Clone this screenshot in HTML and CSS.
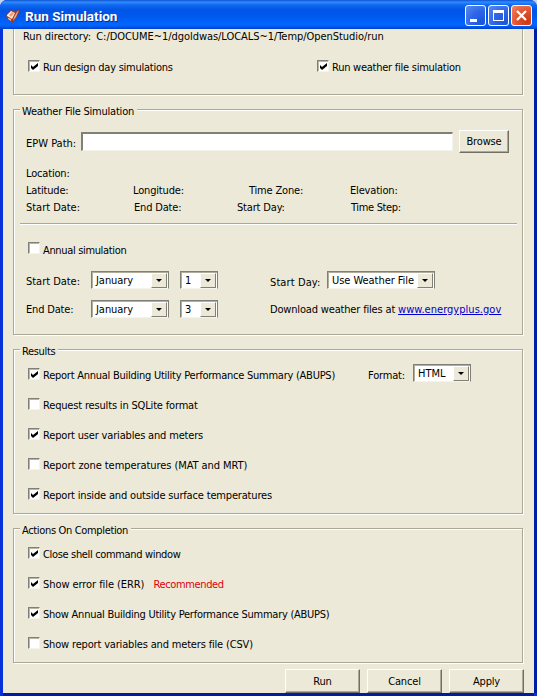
FILE: index.html
```html
<!DOCTYPE html>
<html lang="en">
<head>
<meta charset="utf-8">
<title>Run Simulation</title>
<link rel="stylesheet" href="styles.css">
</head>
<body>
<svg class="defs" width="0" height="0">
  <symbol id="check" viewBox="0 0 7 7"><path d="M0 2v3l2 2 5-4V0L2 4z" fill="#000"/></symbol>
</svg>
<div class="window">
  <header class="titlebar">
    <svg class="app-icon" width="14" height="14" viewBox="0 0 14 14">
      <path d="M0 6L5 1l4 1 4-1v3L7 14l-3-2-3-2z" fill="#9c3a26"/>
      <path d="M1 6l4-4 4 2-3 6-5-3z" fill="#ffe9da"/>
      <path d="M3 6l3-3 2 1-3 4z" fill="#f59a70"/>
      <path d="M13 1l-3 7-3 4 1-4 3-5z" fill="#e8a888"/>
      <path d="M2 9l3 1v2l-3-2z" fill="#f0c0b0"/>
    </svg>
    <h1>Run Simulation</h1>
    <div class="controls">
      <span class="ctl"><svg width="19" height="19"><path d="M4 13h7v3H4z" fill="#fff"/></svg></span>
      <span class="ctl"><svg width="19" height="19"><path d="M4 4h11v11H4zM5 7v7h9V7z" fill="#fff" fill-rule="evenodd"/></svg></span>
      <span class="ctl close"><svg width="19" height="19"><path d="M5 5l9 9M14 5l-9 9" stroke="#fff" stroke-width="2.300"/></svg></span>
    </div>
  </header>
  <main class="client">
    <section class="group g-run">
      <p class="rundir"><span class="w-rd">Run directory:</span> <span class="w-path">C:/DOCUME~1/dgoldwas/LOCALS~1/Temp/OpenStudio/run</span></p>
      <div class="runs">
        <label class="opt t2"><i class="box"><svg width="7" height="7"><use href="#check"/></svg></i><span>Run design day simulations</span></label>
        <label class="opt t2"><i class="box"><svg width="7" height="7"><use href="#check"/></svg></i><span>Run weather file simulation</span></label>
      </div>
    </section>
    <section class="group g-weather">
      <h2>Weather File Simulation</h2>
      <div class="epw"><span class="lbl">EPW Path:</span><span class="field"></span><button>Browse</button></div>
      <div class="info">
        <span>Location:</span>
        <span class="r2">Latitude:</span><span>Longitude:</span><span>Time Zone:</span><span>Elevation:</span>
        <span class="t0">Start Date:</span><span class="n1">End Date:</span><span class="n2">Start Day:</span><span class="n1 t3">Time Step:</span>
      </div>
      <hr>
      <label class="opt annual t3"><i class="box"></i><span>Annual simulation</span></label>
      <div class="dates">
        <span class="t0">Start Date:</span>
        <div class="select"><span>January</span><b></b></div>
        <div class="select"><span>1</span><b></b></div>
        <div class="right"><span class="sd">Start Day:</span><div class="select day"><span>Use Weather File</span><b></b></div></div>
        <span class="low">End Date:</span>
        <div class="select"><span>January</span><b></b></div>
        <div class="select"><span>3</span><b></b></div>
        <div class="right"><span class="low">Download weather files at <a>www.energyplus.gov</a></span></div>
      </div>
    </section>
    <section class="group g-results">
      <h2 class="t3">Results</h2>
      <div class="opts">
        <div class="line"><label class="opt t2"><i class="box"><svg width="7" height="7"><use href="#check"/></svg></i><span>Report Annual Building Utility Performance Summary (ABUPS)</span></label>
          <div class="format"><span>Format:</span><div class="select"><span>HTML</span><b></b></div></div></div>
        <label class="opt"><i class="box"></i><span>Request results in SQLite format</span></label>
        <label class="opt"><i class="box"><svg width="7" height="7"><use href="#check"/></svg></i><span>Report user variables and meters</span></label>
        <label class="opt t1"><i class="box"></i><span>Report zone temperatures (MAT and MRT)</span></label>
        <label class="opt"><i class="box"><svg width="7" height="7"><use href="#check"/></svg></i><span>Report inside and outside surface temperatures</span></label>
      </div>
    </section>
    <section class="group g-actions">
      <h2 class="t3">Actions On Completion</h2>
      <div class="opts">
        <label class="opt t3"><i class="box"><svg width="7" height="7"><use href="#check"/></svg></i><span>Close shell command window</span></label>
        <label class="opt t1"><i class="box"><svg width="7" height="7"><use href="#check"/></svg></i><span>Show error file (ERR)</span><em>Recommended</em></label>
        <label class="opt t2"><i class="box"><svg width="7" height="7"><use href="#check"/></svg></i><span>Show Annual Building Utility Performance Summary (ABUPS)</span></label>
        <label class="opt"><i class="box"></i><span>Show report variables and meters file (CSV)</span></label>
      </div>
    </section>
    <footer><button>Run</button><button>Cancel</button><button>Apply</button></footer>
  </main>
</div>
</body>
</html>
```
FILE: styles.css
```css
* { box-sizing: border-box; margin: 0; padding: 0; }
body {
  width: 537px; height: 696px; overflow: hidden; background: #c8d4ec;
  font: 11px/16px "DejaVu Sans Condensed", "DejaVu Sans", sans-serif;
  font-stretch: condensed; letter-spacing: -0.17px; color: #000; white-space: nowrap;
}
.t0 { letter-spacing: -0.03px; }
.t1 { letter-spacing: -0.07px; }
.t2 { letter-spacing: -0.25px; }
.t3, h2.t3 { letter-spacing: -0.34px; }
.defs { position: absolute; }
.window {
  height: 696px; border-radius: 7px 7px 0 0; overflow: hidden;
  display: flex; flex-direction: column; background: #0831d9;
}
.titlebar {
  height: 29px; flex: none; display: flex; align-items: center; padding: 2px 5px 0 6px;
  background: linear-gradient(#0f50d0 0, #2f8cff 2px, #1068f0 5px, #0055e5 10px, #0058ee 16px, #0066ff 24px, #0060f8 26px, #0040c8 29px);
}
.app-icon { margin-right: 5px; }
h1 { flex: 1; font: bold 13.5px/16px Roboto, sans-serif; letter-spacing: 0; color: #fff; text-shadow: 1px 1px #0a2a8c; }
.controls { display: flex; gap: 2px; }
.ctl {
  width: 21px; height: 21px; border: 1px solid #fff; border-radius: 3px; display: block;
  background: radial-gradient(circle at 85% 85%, #1c56d8, #2e66e8 50%, #5c8cf0);
}
.ctl svg { display: block; }
.close { background: radial-gradient(circle at 80% 80%, #c83a10, #e2532f 50%, #ee8a6c); }
.client {
  flex: 1; margin: 0 3px 3px; background: #ece9d8; padding: 0 10px;
  display: flex; flex-direction: column; box-shadow: 0 3px 0 #001ca0, 3px 0 0 #001ca0;
}
.group { width: 510px; border: 1px solid #aca899; box-shadow: 1px 1px #fff, inset 1px 1px #fff; flex: none; }
.g-run { height: 66px; border-top: 0; box-shadow: 1px 1px #fff, inset 1px 0 #fff; }
.g-weather { height: 226px; margin-top: 14px; }
.g-results { height: 165px; margin-top: 14px; }
.g-actions { height: 135px; margin-top: 14px; }
h2 { font: inherit; letter-spacing: -0.22px; width: fit-content; height: 14px; margin: -6px 0 0 6px; padding: 0 3px 0 2px; background: #ece9d8; }
.rundir { padding-left: 9px; letter-spacing: -0.05px; }
.w-rd { margin-right: 2px; }
.runs { display: flex; margin-top: 15px; }
.runs .opt { width: 289px; flex: none; }
.runs .opt + .opt { width: auto; }
.opt { display: flex; gap: 3px; padding-left: 14px; height: 30px; }
.box {
  width: 12px; height: 12px; background: #fff; border: 1px solid; flex: none;
  border-color: #808076 #f6f4ea #f6f4ea #808076; box-shadow: inset 1px 1px #b8b5a6; display: block; padding: 2px;
}
.annual .box { margin-top: -1px; }
.box svg { display: block; }
.epw { display: flex; margin: 11px 0 0 12px; height: 24px; align-items: flex-start; }
.lbl { width: 55px; padding-top: 7px; letter-spacing: 0; }
.field { width: 372px; height: 19px; margin-top: 3px; background: #fff; border: solid; border-width: 2px 1px 1px 2px; border-color: #808076 #f6f4ea #f6f4ea #808076; }
button {
  font: inherit; letter-spacing: inherit; background: #ece9d8; border: 1px solid;
  border-color: #fff #716f64 #716f64 #fff; box-shadow: inset -1px -1px #aca899;
}
.epw button { width: 50px; height: 23px; margin: 1px 0 0 6px; padding-top: 1px; }
.info { display: grid; grid-template-columns: 107px 116px 101px auto; grid-auto-rows: 17px; margin: 13px 0 0 12px; }
.info .r2 { grid-column: 1; }
.n1 { padding-left: 1px; }
.n2 { margin-left: -12px; }
hr { border: 0; border-top: 1px solid #aca899; border-bottom: 1px solid #fff; margin: 6px 5px 0 6px; }
.annual { margin-top: 18px; height: 28px; }
.dates { display: grid; grid-template-columns: 65px 78px 37px auto; grid-auto-rows: 29px; margin-left: 12px; }
.dates > .select:nth-child(4n+3) { margin-left: 11px; }
.dates > span, .right > span { padding-top: 3px; }
.dates .low { padding-top: 2px; }
.right .sd { width: 57px; padding-top: 4px; letter-spacing: 0.1px; }
.select {
  width: 78px; height: 18px; background: #fff; border: 1px solid #808076; border-bottom-color: #f6f4ea;
  box-shadow: inset 1px 1px #b0ad9f; display: flex; justify-content: space-between; padding: 1px 1px 0 4px;
}
.select span { letter-spacing: -0.05px; }
.dates > .select:nth-child(4n+3) { width: 38px; }
.select b {
  width: 16px; height: 15px; background: #ece9d8; border: 1px solid; border-color: #fff #808076 #808076 #fff;
  display: flex; justify-content: center; align-items: center; flex: none;
}
.select b::after { content: ""; border: 3px solid transparent; border-top-color: #000; border-bottom: 0; }
.right { display: flex; margin-left: 64px; }
.day { width: 108px; }
a { color: #00c; text-decoration: underline; letter-spacing: 0.03px; }
.opts { margin-top: 10px; }
.line { display: flex; height: 30px; }
.line .opt { width: 354px; }
.format { display: flex; }
.format > span { width: 45px; }
.format .select { width: 58px; margin-top: -4px; padding-top: 1px; }
em { font-style: normal; color: #e00010; margin-left: 6px; letter-spacing: -0.35px; }
footer { display: flex; gap: 7px; justify-content: flex-end; margin: 6px -1px 0 0; padding-right: 1px; }
footer button { width: 75px; height: 24px; padding-top: 2px; }
```
